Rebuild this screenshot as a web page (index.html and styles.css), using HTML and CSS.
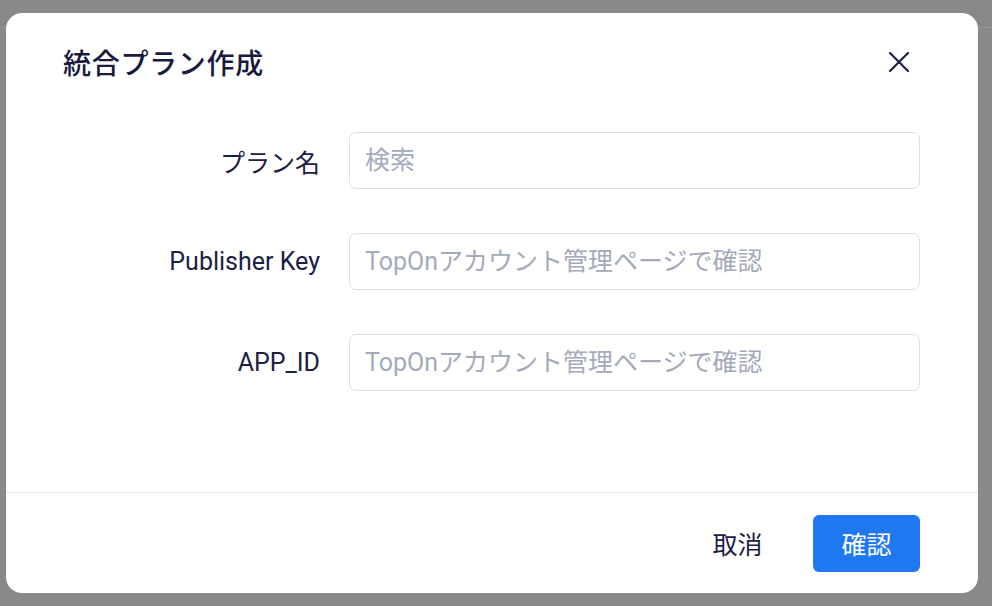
FILE: index.html
```html
<!DOCTYPE html>
<html lang="ja">
<head>
    <meta charset="utf-8">
    <title>統合プラン作成</title>
    <link rel="stylesheet" href="styles.css">
</head>
<body>
    <div class="page-bar"></div>

    <!-- モーダル: 統合プラン作成 -->
    <div class="overlay">
        <div class="modal">
            <div class="modal-header">
                <h2 class="modal-title">統合プラン作成</h2>
                <button class="close-btn" aria-label="閉じる">
                    <svg width="22" height="22" viewBox="0 0 22 22">
                        <path d="M2 2 L20 20 M20 2 L2 20" stroke="#1d2045" stroke-width="2.2" stroke-linecap="round" fill="none"/>
                    </svg>
                </button>
            </div>

            <form class="modal-body">
                <label class="field-label" for="planName">プラン名</label>
                <input class="field-input" type="text" id="planName" placeholder="検索">

                <label class="field-label" for="publisherKey">Publisher Key</label>
                <input class="field-input" type="text" id="publisherKey" placeholder="TopOnアカウント管理ページで確認">

                <label class="field-label" for="appId">APP_ID</label>
                <input class="field-input" type="text" id="appId" placeholder="TopOnアカウント管理ページで確認">
            </form>

            <div class="modal-footer">
                <button class="btn btn-text">取消</button>
                <button class="btn btn-primary">確認</button>
            </div>
        </div>
    </div>
</body>
</html>
```

FILE: styles.css
```css
html, body {
    margin: 0;
    padding: 0;
}

body {
    font-family: Roboto, "Noto Sans CJK JP", sans-serif;
    background-color: #898989;
    color: #1d2045;
    height: 606px;
    overflow: hidden;
}

.page-bar {
    height: 28px;
    border-bottom: 1px solid #969696;
    box-sizing: border-box;
}

.overlay {
    position: absolute;
    top: 0;
    left: 0;
    right: 0;
    bottom: 0;
    padding: 13px 14px 13px 6px;
}

.modal {
    width: 972px;
    height: 580px;
    background-color: #fff;
    border-radius: 16px;
    display: flex;
    flex-direction: column;
    overflow: hidden;
}

.modal-header {
    height: 98px;
    padding: 0 58px 0 57px;
    display: flex;
    align-items: center;
    justify-content: space-between;
}

.modal-title {
    margin: 0;
    font-size: 28px;
    font-weight: 500;
    color: #181b3d;
    letter-spacing: 0.7px;
}

.close-btn {
    border: none;
    background: none;
    padding: 0;
    width: 22px;
    height: 22px;
    margin-right: 10px;
    cursor: pointer;
    display: flex;
}

.modal-body {
    flex: 1;
    margin: 0;
    padding: 21px 58px 0 58px;
    display: grid;
    grid-template-columns: 256px 1fr;
    column-gap: 29px;
    row-gap: 44px;
    align-content: start;
    align-items: center;
}

.field-label {
    text-align: right;
    font-size: 25px;
    color: #1d2045;
}

.field-input {
    height: 57px;
    box-sizing: border-box;
    border: 1px solid #dcdfe8;
    border-radius: 7px;
    padding: 0 15px;
    font-family: Roboto, "Noto Sans CJK JP", sans-serif;
    font-size: 25px;
    color: #1d2045;
    outline: none;
}

.field-input::placeholder {
    color: #a4aabb;
}

.modal-footer {
    height: 101px;
    box-sizing: border-box;
    border-top: 1px solid #e3e4ea;
    padding: 0 58px;
    display: flex;
    align-items: center;
    justify-content: flex-end;
    gap: 22px;
}

.btn {
    width: 107px;
    height: 57px;
    border: none;
    border-radius: 6px;
    font-family: Roboto, "Noto Sans CJK JP", sans-serif;
    font-size: 25px;
    cursor: pointer;
}

.btn-text {
    background: none;
    color: #1d2045;
}

.btn-primary {
    background-color: #1f78f0;
    color: #fff;
}
```
